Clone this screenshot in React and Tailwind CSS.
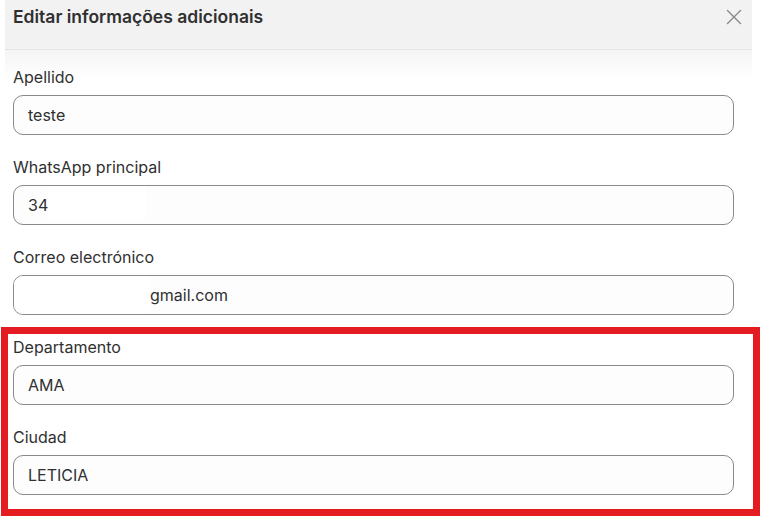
import { X } from 'lucide-react'

const fields = [
  { label: 'Apellido', value: 'teste' },
  { label: 'WhatsApp principal', value: 'phone' },
  { label: 'Correo electrónico', value: 'email' },
  { label: 'Departamento', value: 'AMA' },
  { label: 'Ciudad', value: 'LETICIA' },
]

function FieldValue({ value }) {
  // los datos personales aparecen tapados con un recuadro blanco
  if (value === 'phone') {
    return (
      <span className="flex items-center">
        34
        <span className="inline-block w-[98px] h-[33px] bg-white -mt-[6px]" />
      </span>
    )
  }
  if (value === 'email') {
    return (
      <span className="flex items-center -ml-[14px]">
        <span className="inline-block w-[136px] h-[38px] bg-white" />
        gmail.com
      </span>
    )
  }
  return <span>{value}</span>
}

export default function App() {
  return (
    <div
      className="relative w-[762px] h-[517px] bg-white overflow-hidden text-[#303030]"
      style={{ fontFamily: 'Inter, "Noto Sans", sans-serif' }}
    >
      <div className="ml-[5px] w-[747px]">
        <div className="h-[50px] bg-[#f2f2f2] border-b border-[#e4e4e4] flex items-start justify-between pl-[8px] pr-[5px] pt-[5px]">
          <h2 className="text-[17.5px] leading-[24px] font-semibold">Editar informações adicionais</h2>
          <button type="button" className="-mt-[1px] text-[#8a8a8a]">
            <X size={26} strokeWidth={1.3} />
          </button>
        </div>
        <div className="h-[30px] -mb-[30px] bg-gradient-to-b from-[#f4f4f4] to-white" />
      </div>

      <div className="pl-[13px] pt-[17px] flex flex-col gap-[22px]">
        {fields.map((f) => (
          <div key={f.label} className="flex flex-col">
            <label className="text-[16px] leading-[20px] mb-[8px]">{f.label}</label>
            <div className="w-[721px] h-[40px] rounded-[10px] border border-[#8a8a8a] bg-[#fdfdfd] flex items-center px-[14px] text-[16px] overflow-hidden">
              <FieldValue value={f.value} />
            </div>
          </div>
        ))}
      </div>

      <div className="absolute left-[1px] top-[327px] w-[759px] h-[189px] border-[7px] border-[#e41c22]" />
    </div>
  )
}
